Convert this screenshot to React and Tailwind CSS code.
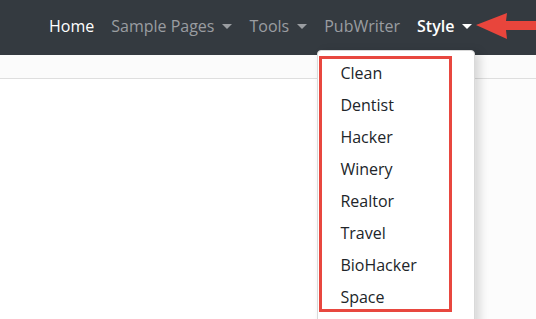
const navItems = [
  { label: "Home", active: true },
  { label: "Sample Pages", caret: true },
  { label: "Tools", caret: true },
  { label: "PubWriter" },
  { label: "Style", caret: true, active: true, open: true },
];

const styles = ["Clean", "Dentist", "Hacker", "Winery", "Realtor", "Travel", "BioHacker", "Space"];

function Caret() {
  return (
    <span className="ml-[8px] inline-block h-0 w-0 border-x-[5px] border-t-[5px] border-x-transparent border-t-current" />
  );
}

function StyleMenu() {
  return (
    <div className="absolute -right-[3px] top-[36px] z-10 h-[300px] w-[158px] rounded-[4px] border border-[#d9d9d9] bg-white py-[6px] font-normal shadow-[5px_2px_10px_rgba(0,0,0,0.15)]">
      {styles.map((s) => (
        <div key={s} className="h-[32px] px-[22px] text-[16px] leading-[32px] text-[#212529]">
          {s}
        </div>
      ))}
      {/* highlight box drawn over the menu */}
      <div className="absolute left-px top-[5px] h-[256px] w-[133px] border-[3px] border-[#e8473f]" />
    </div>
  );
}

export default function App() {
  return (
    <div
      className="flex h-[319px] w-[536px] flex-col overflow-hidden bg-white"
      style={{ fontFamily: "'Open Sans', Lato, sans-serif" }}
    >
      <nav className="flex h-[55px] shrink-0 items-center bg-[#343a40] pl-[49px] pb-[3px]">
        <ul className="flex items-center gap-[17px] text-[16px]">
          {navItems.map((item) => (
            <li
              key={item.label}
              className={`relative flex items-center ${
                item.open ? "font-semibold text-white" : item.active ? "font-medium text-white" : "text-[#9a9da1]"
              }`}
            >
              {item.label}
              {item.caret && <Caret />}
              {item.open && <StyleMenu />}
            </li>
          ))}
        </ul>
        {/* red arrow pointing at Style */}
        <svg className="ml-auto" width="60" height="30" viewBox="0 0 60 30">
          <path d="M0 14 L31 2 L30 10 L60 10 L60 19 L30 19 L31 28 Z" fill="#e8453c" />
        </svg>
      </nav>
      <div className="h-[24px] shrink-0 border-b border-[#dedede] bg-[#fbfbfb]" />
      <div className="flex flex-1">
        <div className="flex-1 bg-white" />
        <div className="w-[60px] bg-[#fcfcfc]" />
      </div>
    </div>
  );
}
